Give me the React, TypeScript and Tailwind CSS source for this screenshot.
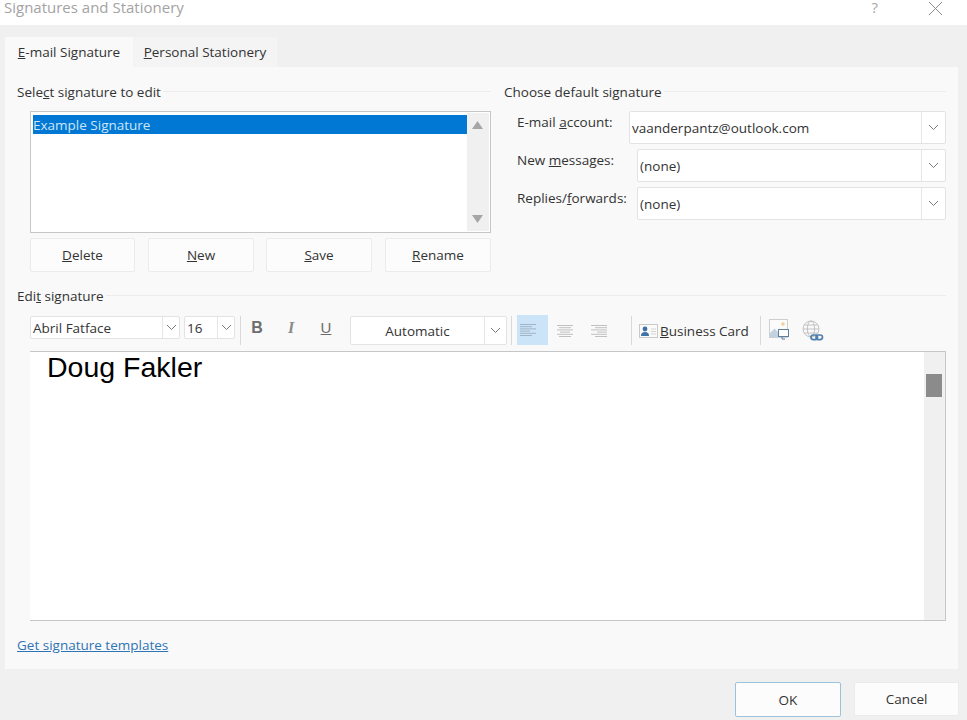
import type { ReactNode } from "react";

function Chevron() {
  return (
    <svg width="11" height="7" viewBox="0 0 11 7" fill="none" stroke="#7a7a7a" strokeWidth="1">
      <path d="M1 1l4.5 4.5L10 1" />
    </svg>
  );
}

function GroupTitle({ children }: { children: ReactNode }) {
  return (
    <div className="flex items-center gap-[2px] h-[16px]">
      <span className="text-[13.5px] leading-[16px] text-[#333] whitespace-nowrap">{children}</span>
      <div className="flex-1 h-px bg-[#ececec] mt-[-2px]" />
    </div>
  );
}

function PushButton({ children, className }: { children: ReactNode; className: string }) {
  return (
    <button className={`h-[34px] pt-[1px] bg-[#fcfcfc] border border-[#ebebeb] rounded-[2px] text-[13.5px] text-[#333] ${className}`}>
      {children}
    </button>
  );
}

function Combo({ text, className, chevronWidth }: { text: string; className: string; chevronWidth: string }) {
  return (
    <div className={`flex items-center bg-white border border-[#e3e3e3] rounded-[2px] ${className}`}>
      <span className="flex-1 pl-[2px] pt-[1px] text-[13.5px] text-[#333] whitespace-nowrap overflow-hidden">{text}</span>
      <div className={`h-full flex items-center justify-center border-l border-[#e6e6e6] ${chevronWidth}`}>
        <Chevron />
      </div>
    </div>
  );
}

function AccountRow({ label, text, labelWidth }: { label: ReactNode; text: string; labelWidth: string }) {
  return (
    <div className="flex">
      <div className={`${labelWidth} pt-[3px] text-[13.5px] leading-[16px] text-[#333] whitespace-nowrap`}>{label}</div>
      <Combo text={text} className="flex-1 h-[33px]" chevronWidth="w-[24px]" />
    </div>
  );
}

function Divider() {
  return <div className="w-px h-[29px] bg-[#d9d9d9]" />;
}

function AlignIcon({ kind, color }: { kind: "left" | "center" | "right"; color: string }) {
  const rows = [16, 12, 16, 10, 16, 12];
  return (
    <svg width="18" height="14" viewBox="0 0 18 14" stroke={color} strokeWidth="1">
      {rows.map((w, i) => {
        const x = kind === "left" ? 1 : kind === "center" ? 9 - w / 2 : 17 - w;
        return <line key={i} x1={x} x2={x + w} y1={1.5 + i * 2.2} y2={1.5 + i * 2.2} />;
      })}
    </svg>
  );
}

function BusinessCardIcon() {
  return (
    <svg width="19" height="16" viewBox="0 0 19 16">
      <rect x="0.5" y="1.5" width="18" height="13" fill="#fafafa" stroke="#c9c9c9" />
      <circle cx="6" cy="6" r="2.4" fill="#3f73a8" />
      <path d="M2 13c0-3 1.5-4 4-4s4 1 4 4z" fill="#3f73a8" />
      <path d="M12 6h5M12 8.5h5M12 11h5" stroke="#d3d3d3" />
    </svg>
  );
}

function PictureIcon() {
  return (
    <svg width="22" height="22" viewBox="0 0 22 22" fill="none">
      <rect x="1.5" y="0.5" width="18" height="18" fill="#fbfbfb" stroke="#cfcfcf" />
      <circle cx="15" cy="5" r="1.8" fill="#f0cf9a" />
      <path d="M1.5 18.5v-4l5-5 5 5 2 4z" fill="#c3d2e0" />
      <rect x="10.5" y="10.5" width="10" height="7" fill="#fff" stroke="#5f7f9e" />
      <path d="M14 18v2h3" stroke="#5f7f9e" />
    </svg>
  );
}

function GlobeLinkIcon() {
  return (
    <svg width="22" height="22" viewBox="0 0 22 22" fill="none">
      <g stroke="#bdbdbd" strokeWidth="0.9">
        <circle cx="9" cy="9" r="8" />
        <ellipse cx="9" cy="9" rx="3.6" ry="8" />
        <path d="M1 9h16M2.2 5h13.6M2.2 13h13.6" />
      </g>
      <g stroke="#4f7fae" strokeWidth="1.7">
        <rect x="9" y="15" width="6.5" height="4.6" rx="2.3" />
        <rect x="14" y="15" width="6.5" height="4.6" rx="2.3" />
      </g>
    </svg>
  );
}

export default function App() {
  return (
    <div
      className="w-[967px] h-[720px] overflow-hidden flex flex-col bg-[#f0f0f0]"
      style={{ fontFamily: '"Open Sans", "Noto Sans", sans-serif' }}
    >
      {/* title bar */}
      <div className="h-[25px] shrink-0 bg-white flex items-start pl-[4px] pr-[24px]">
        <span className="flex-1 text-[15px] leading-[15px] text-[#a3a3a3] whitespace-nowrap">Signatures and Stationery</span>
        <span className="text-[15px] leading-[15px] text-[#a8a8a8] mr-[50px]">?</span>
        <svg className="mt-[1px]" width="15" height="15" viewBox="0 0 15 15" stroke="#8c8c8c" strokeWidth="1">
          <path d="M1 1l13 13M14 1L1 14" />
        </svg>
      </div>

      {/* tabs */}
      <div className="flex pl-[5px] pt-[12px] h-[42px] shrink-0">
        <div className="w-[128px] h-[30px] bg-[#f9f9f9] flex items-center justify-center text-[13.5px] text-[#333]">
          <span><u>E</u>-mail Signature</span>
        </div>
        <div className="w-[144px] h-[30px] bg-[#f4f4f4] flex items-center justify-center text-[13.5px] text-[#333]">
          <span><u>P</u>ersonal Stationery</span>
        </div>
      </div>

      {/* panel */}
      <div className="ml-[5px] w-[953px] h-[602px] shrink-0 bg-[#f9f9f9] pl-[12px] pr-[12px] pt-[17px]">
        <div className="flex gap-[13px]">
          <div className="w-[474px]">
            <GroupTitle>Sele<u>c</u>t signature to edit</GroupTitle>
            <div className="ml-[13px] mt-[11px] h-[122px] bg-white border border-[#c6c6c6] flex p-[1px] pt-[3px]">
              <div className="flex-1">
                <div className="h-[19px] ml-[1px] bg-[#0078d4] text-[13.5px] leading-[20px] text-[#cfe6f7] whitespace-nowrap">
                  Example Signature
                </div>
              </div>
              <div className="w-[22px] -mt-[2px] bg-[#f0f0f0] flex flex-col items-center justify-between py-[8px] pr-[2px]">
                <svg width="11" height="8" viewBox="0 0 11 8"><path d="M5.5 0L11 8H0z" fill="#a6a6a6" /></svg>
                <svg width="11" height="8" viewBox="0 0 11 8"><path d="M0 0h11L5.5 8z" fill="#a6a6a6" /></svg>
              </div>
            </div>
            <div className="ml-[13px] mt-[5px] flex">
              <PushButton className="w-[105px]"><u>D</u>elete</PushButton>
              <PushButton className="ml-[13px] w-[106px]"><u>N</u>ew</PushButton>
              <PushButton className="ml-[12px] w-[106px]"><u>S</u>ave</PushButton>
              <PushButton className="ml-[13px] w-[106px]"><u>R</u>ename</PushButton>
            </div>
          </div>

          <div className="flex-1">
            <GroupTitle>Choose default signature</GroupTitle>
            <div className="mt-[11px] pl-[13px] flex flex-col gap-[5px]">
              <AccountRow label={<>E-mail <u>a</u>ccount:</>} text="vaanderpantz@outlook.com" labelWidth="w-[112px]" />
              <AccountRow label={<>New <u>m</u>essages:</>} text="(none)" labelWidth="w-[120px]" />
              <AccountRow label={<>Replies/<u>f</u>orwards:</>} text="(none)" labelWidth="w-[120px]" />
            </div>
          </div>
        </div>

        <div className="mt-[16px]">
          <GroupTitle>Edi<u>t</u> signature</GroupTitle>
        </div>

        {/* format toolbar */}
        <div className="ml-[13px] mt-[12px] h-[30px] flex items-start">
          <Combo text="Abril Fatface" className="w-[150px] h-[23px]" chevronWidth="w-[17px]" />
          <Combo text="16" className="ml-[4px] w-[51px] h-[23px]" chevronWidth="w-[17px]" />
          <div className="ml-[5px]"><Divider /></div>
          <div className="w-[34px] ml-[-1px] h-[24px] flex items-center justify-center text-[16px] font-bold text-[#6e6e6e]" style={{ fontFamily: '"Liberation Sans", sans-serif' }}>B</div>
          <div className="w-[34px] h-[24px] flex items-center justify-center text-[16px] font-bold italic text-[#8a8a8a]" style={{ fontFamily: '"Liberation Serif", serif' }}>I</div>
          <div className="w-[36px] h-[24px] flex items-center justify-center text-[15px] text-[#6e6e6e] underline" style={{ fontFamily: '"Liberation Sans", sans-serif' }}>U</div>
          <div className="ml-[6px] w-[157px] h-[29px] flex items-center bg-white border border-[#e3e3e3] rounded-[2px]">
            <span className="flex-1 pt-[1px] text-center text-[13.5px] text-[#333]">Automatic</span>
            <div className="w-[22px] h-full flex items-center justify-center border-l border-[#e6e6e6]"><Chevron /></div>
          </div>
          <div className="ml-[4px]"><Divider /></div>
          <div className="ml-[5px] w-[31px] h-[30px] -mt-px bg-[#cce4f7] flex items-center pl-[2px]"><AlignIcon kind="left" color="#9fb4c6" /></div>
          <div className="w-[33px] h-[30px] flex items-center justify-center"><AlignIcon kind="center" color="#c0c0c0" /></div>
          <div className="w-[35px] h-[30px] flex items-center justify-center"><AlignIcon kind="right" color="#c0c0c0" /></div>
          <div className="ml-[15px]"><Divider /></div>
          <div className="ml-[7px] h-[30px] flex items-center gap-[2px] text-[13.5px] text-[#333] whitespace-nowrap">
            <BusinessCardIcon />
            <span><u>B</u>usiness Card</span>
          </div>
          <div className="ml-[11px]"><Divider /></div>
          <div className="ml-[7px] mt-[3px]"><PictureIcon /></div>
          <div className="ml-[12px] mt-[4px]"><GlobeLinkIcon /></div>
        </div>

        {/* editor */}
        <div className="ml-[13px] mt-[5px] h-[270px] flex bg-white border-t border-r border-b border-[#c6c6c6]">
          <div className="flex-1 pl-[17px] text-[28.5px] leading-[30px] text-black" style={{ fontFamily: '"Liberation Sans", sans-serif' }}>
            Doug Fakler
          </div>
          <div className="w-[21px] bg-[#f0f0f0] pt-[22px] pl-[2px] pr-[3px]">
            <div className="h-[23px] bg-[#8b8b8b]" />
          </div>
        </div>

        <div className="mt-[16px] text-[13.5px] leading-[16px]">
          <span className="text-[#2f74b5] underline">Get signature templates</span>
        </div>
      </div>

      {/* footer */}
      <div className="flex justify-end gap-[13px] pr-[8px] mt-[13px]">
        <button className="w-[106px] h-[35px] pt-[1px] bg-[#fcfcfc] border border-[#9dc3dc] rounded-[2px] text-[13.5px] text-[#333]">OK</button>
        <button className="w-[105px] h-[34px] pt-[1px] bg-[#fcfcfc] border border-[#ebebeb] rounded-[2px] text-[13.5px] text-[#333]">Cancel</button>
      </div>
    </div>
  );
}
